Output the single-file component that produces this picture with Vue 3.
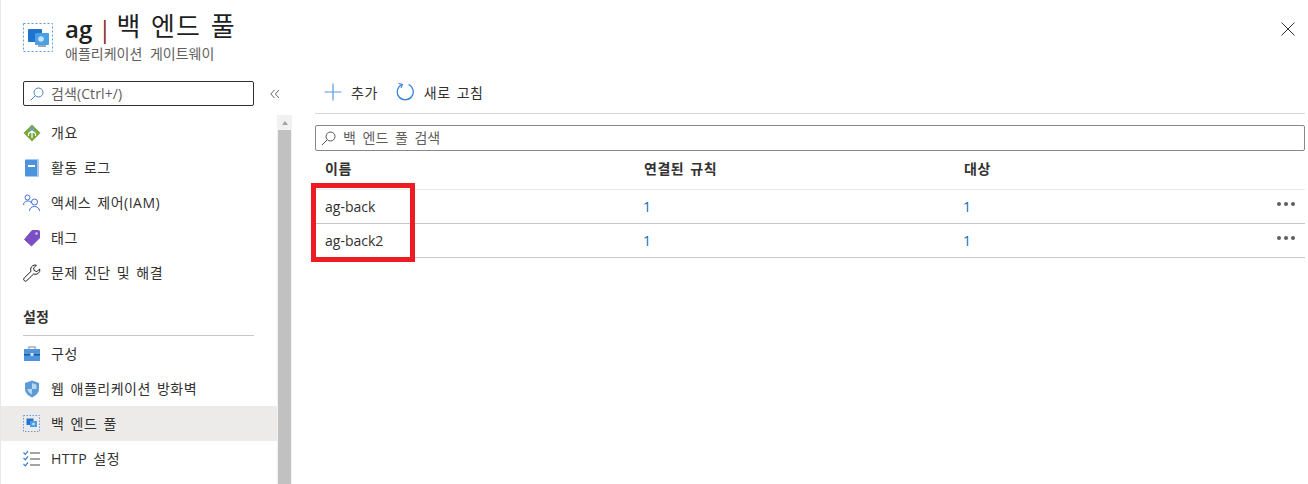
<script setup>
const cols = ['이름', '연결된 규칙', '대상']
const rows = [
  { name: 'ag-back', rules: '1', targets: '1' },
  { name: 'ag-back2', rules: '1', targets: '1' }
]
</script>

<template>
  <div class="page">
    <header class="head">
      <svg class="head-icon" width="30" height="30" viewBox="0 0 30 30">
        <rect x=".5" y=".5" width="29" height="28" fill="none" stroke="#5b9be0" stroke-dasharray="2 2" />
        <rect x="5" y="6" width="14" height="13" rx="1" fill="#1f74cf" />
        <rect x="12" y="10" width="14" height="12" rx="1" fill="#4aa0e6" />
        <rect x="15" y="22" width="8" height="2" fill="#9aa5ad" />
        <circle cx="18" cy="16" r="2.800" fill="#bfe6f8" />
      </svg>
      <div>
        <h1 class="title"><b>ag</b><span class="pipe">|</span><span class="page-name">백 엔드 풀</span></h1>
        <p class="sub">애플리케이션 게이트웨이</p>
      </div>
      <svg class="close" width="14" height="14" viewBox="0 0 14 14"><path d="M.5.5l13 13M13.500.5l-13 13" stroke="#333" fill="none" /></svg>
    </header>

    <div class="body">
      <aside class="side">
        <div class="side-top">
          <div class="side-search">
            <svg width="14" height="14" viewBox="0 0 14 14"><circle cx="8.500" cy="5.500" r="4.500" fill="none" stroke="#4a7fc0" /><path d="M5.300 8.700L.8 13.200" stroke="#4a7fc0" fill="none" /></svg>
            <span>검색(Ctrl+/)</span>
          </div>
          <svg class="collapse" width="10" height="10" viewBox="0 0 10 10"><path d="M4.500 1L.8 5l3.700 4M9 1L5.300 5 9 9" fill="none" stroke="#666" /></svg>
        </div>
        <div class="side-main">
          <nav class="menu">
            <a class="item">
              <svg width="18" height="18" viewBox="0 0 18 18"><path d="M9 .5l8.500 8.500L9 17.500.5 9z" fill="#7aa83c" /><circle cx="9" cy="5" r="1.800" fill="#5ea0ef" /><path d="M9 6.500V14M5.500 9.500L9 7l3.500 2.500M5.500 9.500v2.500M12.500 9.500v2.500" stroke="#fff" stroke-width="1.200" fill="none" /></svg>
              <span>개요</span>
            </a>
            <a class="item">
              <svg width="18" height="18" viewBox="0 0 18 18"><rect x="2" y=".5" width="14" height="17" rx="1" fill="#4b93dd" /><rect x="14" y=".5" width="2" height="17" fill="#a8c8ea" /><rect x="5" y="6" width="7" height="2" fill="#fff" /></svg>
              <span>활동 로그</span>
            </a>
            <a class="item">
              <svg width="18" height="18" viewBox="0 0 18 18"><circle cx="4.500" cy="3.500" r="2.500" fill="none" stroke="#3f6fd8" /><path d="M.5 11c0-5 7-5 8-2" fill="none" stroke="#3f6fd8" /><circle cx="11.500" cy="8" r="3" fill="none" stroke="#3f6fd8" /><path d="M6.500 17c0-6 10-6 10 0" fill="none" stroke="#3f6fd8" /></svg>
              <span>액세스 제어(IAM)</span>
            </a>
            <a class="item">
              <svg width="18" height="18" viewBox="0 0 18 18"><path d="M9 1.500h6.500a1 1 0 0 1 1 1V9l-8 8-7-6.500z" fill="#7a4fc4" stroke="#7a4fc4" stroke-linejoin="round" /><circle cx="13.500" cy="4.500" r="1.200" fill="#d8c8f2" /></svg>
              <span>태그</span>
            </a>
            <a class="item">
              <svg width="18" height="18" viewBox="0 0 18 18"><path d="M12 1a4.500 4.500 0 0 0-4 6.300L1.200 14a1.800 1.800 0 0 0 2.600 2.600L10.600 10A4.500 4.500 0 0 0 16.800 5l-3 2.600-2.600-1-.6-2.600 2.800-2.800z" fill="none" stroke="#222" /></svg>
              <span>문제 진단 및 해결</span>
            </a>
            <h2 class="group">설정</h2>
            <a class="item">
              <svg width="18" height="18" viewBox="0 0 18 18"><path d="M6 4V2h6v2" fill="none" stroke="#a5adb5" stroke-width="1.500" /><rect x="1" y="4" width="16" height="12" fill="#4f94e0" /><rect x="1" y="9" width="16" height="1.600" fill="#1f5f9f" /><rect x="7.500" y="8" width="3" height="3" fill="#cfe4f8" /></svg>
              <span>구성</span>
            </a>
            <a class="item">
              <svg width="18" height="18" viewBox="0 0 18 18"><path d="M9 .5l7 2.500v6c0 4-3.500 7-7 8.500C5.500 16 2 13 2 9V3z" fill="#5d9bd6" /><path d="M9 3l4.500 1.800V9H9zM9 9H4.500c0 2.500 2.200 4.500 4.500 5.500z" fill="#b8d8f0" /></svg>
              <span>웹 애플리케이션 방화벽</span>
            </a>
            <a class="item active">
              <svg width="18" height="18" viewBox="0 0 18 18"><rect x=".5" y=".5" width="16" height="16" fill="none" stroke="#6a9bd8" stroke-dasharray="1.500 1.500" /><rect x="3.500" y="3.500" width="7" height="6.500" fill="#1f74cf" /><rect x="7" y="6" width="7" height="6" fill="#4aa0e6" /><circle cx="10.500" cy="9" r="1.300" fill="#bfe6f8" /></svg>
              <span>백 엔드 풀</span>
            </a>
            <a class="item">
              <svg width="18" height="18" viewBox="0 0 18 18"><path d="M.5 2.500l1.800 1.800L5 1M.5 8l1.800 1.800L5 6.500M.5 14l1.800 1.800L5 12.500" fill="none" stroke="#3d80d8" stroke-width="1.200" /><path d="M7 3h10M7 9h10M7 15h10" stroke="#888" stroke-width="1.500" /></svg>
              <span>HTTP 설정</span>
            </a>
          </nav>
          <div class="scrollbar">
            <div class="arrow"></div>
            <div class="thumb"></div>
          </div>
        </div>
      </aside>

      <main class="main">
        <div class="toolbar">
          <button class="tool add">
            <svg width="18" height="18" viewBox="0 0 18 18"><path d="M9 .5v17M.5 9h17" stroke="#5b9be0" stroke-width="1.200" fill="none" /></svg>
            <span>추가</span>
          </button>
          <button class="tool">
            <svg width="19" height="20" viewBox="0 0 19 20"><path d="M6 2.500A8 8 0 1 0 12.500 2.500" fill="none" stroke="#3d85d8" stroke-width="1.300" /><path d="M2.500 1.500l4 1-1.500 3.500" fill="none" stroke="#3d85d8" stroke-width="1.100" /></svg>
            <span>새로 고침</span>
          </button>
        </div>
        <div class="filter">
          <svg width="15" height="15" viewBox="0 0 15 15"><circle cx="9.500" cy="5.500" r="4.500" fill="none" stroke="#555" /><path d="M6.200 8.800L1 14" stroke="#555" fill="none" /></svg>
          <span>백 엔드 풀 검색</span>
        </div>
        <div class="table">
          <div class="tr th">
            <div v-for="c in cols" :key="c" class="td">{{ c }}</div>
          </div>
          <div v-for="r in rows" :key="r.name" class="tr row">
            <div class="td">{{ r.name }}</div>
            <div class="td link">{{ r.rules }}</div>
            <div class="td link">{{ r.targets }}</div>
            <div class="more"><i></i><i></i><i></i></div>
          </div>
          <div class="highlight"></div>
        </div>
      </main>
    </div>
  </div>
</template>

<style>
html, body { margin: 0; overflow: hidden; background: #fff; }
</style>

<style scoped>
.page {
  width: 1308px; height: 484px; overflow: hidden; background: #fff; box-sizing: border-box;
  border-left: 1px solid #e8e8e8;
  font-family: "Open Sans", "Noto Sans CJK KR", sans-serif; font-size: 14px; word-spacing: 2px; letter-spacing: .5px; color: #323130;
}
.head { height: 80px; box-sizing: border-box; padding: 23px 0 0 22px; display: flex; gap: 12px; position: relative; }
.head-icon { flex: none; }
.title { margin: -11px 0 0; font-size: 24px; line-height: 34px; font-weight: 400; color: #1f1f1f; display: flex; align-items: flex-start; word-spacing: 2px; letter-spacing: 0; }
.title b { font-weight: 600; }
.pipe { color: #8a2b2b; margin: 0 5px 0 6px; }
.page-name { font-size: 26px; line-height: 28px; letter-spacing: 1px; }
.sub { margin: -1px 0 0; font-size: 14px; line-height: 18px; color: #605e5c; letter-spacing: 0; word-spacing: 4px; }
.close { position: absolute; top: 22px; right: 13px; }
.body { display: flex; height: 404px; }
.side { width: 291px; flex: none; }
.side-top { height: 35px; padding: 1px 0 0 22px; display: flex; align-items: flex-start; box-sizing: border-box; }
.side-search { width: 231px; height: 25px; box-sizing: border-box; border: 1px solid #323130; border-radius: 2px; display: flex; align-items: center; gap: 7px; padding-left: 6px; color: #605e5c; letter-spacing: .1px; }
.side-search span { margin-bottom: 2px; }
.collapse { margin: 8px 0 0 16px; }
.side-main { display: flex; height: 369px; }
.menu { width: 276px; flex: none; }
.item { height: 35px; display: flex; align-items: center; gap: 10px; padding-left: 22px; }
.item svg { flex: none; }
.item span { margin-bottom: 2px; }
.item.active { background: #edebe9; }
.group { margin: 8px 0 0 22px; width: 231px; height: 38px; box-sizing: border-box; padding-top: 9px; font-size: 14px; line-height: 20px; font-weight: 700; border-bottom: 1px solid #c8c6c4; letter-spacing: 0; }
.scrollbar { width: 15px; background: #f1f1f1; flex: none; display: flex; flex-direction: column; align-items: center; }
.arrow { margin: 6px 0 5px; border: 3.500px solid transparent; border-top: 0; border-bottom: 4px solid #a3a3a3; }
.thumb { width: 13px; flex: 1; background: #c1c1c1; }
.main { flex: 1; margin-left: 23px; margin-right: 3px; min-width: 0; }
.toolbar { height: 35px; box-sizing: border-box; border-bottom: 1px solid #d8d6d4; display: flex; align-items: flex-start; padding: 3px 0 0 9px; gap: 18px; margin-top: -1px; }
.tool { display: flex; align-items: center; gap: 9px; border: 0; background: none; padding: 0; height: 20px; font: inherit; word-spacing: 2px; letter-spacing: .5px; color: #323130; }
.filter { margin-top: 11px; height: 26px; box-sizing: border-box; border: 1px solid #8a8886; border-radius: 2px; display: flex; align-items: center; gap: 7px; padding-left: 5px; color: #605e5c; word-spacing: 3px; letter-spacing: 0; }
.filter span { margin-bottom: 3px; }
.table { position: relative; }
.tr { display: grid; grid-template-columns: 319px 320px 1fr; padding-left: 10px; position: relative; letter-spacing: 0; }
.th { height: 39px; align-items: center; font-weight: 600; border-bottom: 1px solid #edebe9; box-sizing: border-box; color: #323130; padding-bottom: 5px; letter-spacing: .5px; }
.row { height: 34px; align-items: center; border-bottom: 1px solid #c8c6c4; box-sizing: border-box; }
.tr .link { color: #0f6cbd; margin-left: -1px; }
.more { position: absolute; right: 10px; top: 12px; display: flex; gap: 3px; }
.more i { width: 4px; height: 4px; border-radius: 50%; background: #605e5c; }
.highlight { position: absolute; left: -4px; top: 32px; width: 104px; height: 79px; box-sizing: border-box; border: 5px solid #ed1c24; }
</style>
